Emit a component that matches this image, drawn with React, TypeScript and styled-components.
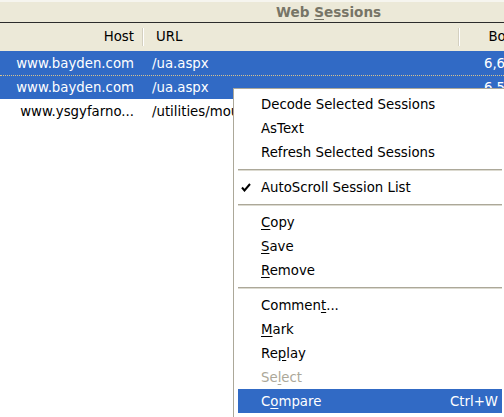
import styled, { createGlobalStyle } from "styled-components";

const GlobalStyle = createGlobalStyle`
  html, body {
    margin: 0;
    padding: 0;
    background: #ffffff;
  }
  body {
    font-family: "DejaVu Sans", Verdana, sans-serif;
    font-size: 13.3px;
  }
`;

type Session = {
  host: string;
  url: string;
  body: string;
  selected: boolean;
  focused?: boolean;
};

type MenuEntry =
  | { kind: "separator" }
  | {
      kind: "item";
      label: string;
      accessKey?: number;
      checked?: boolean;
      disabled?: boolean;
      active?: boolean;
      shortcut?: string;
    };

const sessions: Session[] = [
  { host: "www.bayden.com", url: "/ua.aspx", body: "6,606", selected: true },
  {
    host: "www.bayden.com",
    url: "/ua.aspx",
    body: "6,551",
    selected: true,
    focused: true,
  },
  {
    host: "www.ysgyfarno...",
    url: "/utilities/mouse.aspx",
    body: "2,140",
    selected: false,
  },
];

const menu: MenuEntry[] = [
  { kind: "item", label: "Decode Selected Sessions" },
  { kind: "item", label: "AsText" },
  { kind: "item", label: "Refresh Selected Sessions" },
  { kind: "separator" },
  { kind: "item", label: "AutoScroll Session List", checked: true },
  { kind: "separator" },
  { kind: "item", label: "Copy", accessKey: 0 },
  { kind: "item", label: "Save", accessKey: 0 },
  { kind: "item", label: "Remove", accessKey: 0 },
  { kind: "separator" },
  { kind: "item", label: "Comment...", accessKey: 6 },
  { kind: "item", label: "Mark", accessKey: 0 },
  { kind: "item", label: "Replay", accessKey: 2 },
  { kind: "item", label: "Select", accessKey: 2, disabled: true },
  {
    kind: "item",
    label: "Compare",
    accessKey: 1,
    active: true,
    shortcut: "Ctrl+W",
  },
];

const Frame = styled.div`
  position: relative;
  width: 504px;
  height: 417px;
  overflow: hidden;
  background: #ffffff;
`;

const TitleBar = styled.div`
  height: 20px;
  background: #ece9d8;
  border-top: 2px solid #f6f5ef;
  border-bottom: 1px solid #2b2b2b;
  display: flex;
  align-items: center;
  padding-left: 276px;
`;

const Title = styled.span`
  font-weight: bold;
  font-size: 13.6px;
  color: #777567;
  white-space: nowrap;
`;

const Grid = styled.div`
  display: grid;
  grid-template-columns: 142px 316px 72px;
  width: 530px;
`;

const HeaderRow = styled(Grid)`
  height: 28px;
  background: #ece9d8;
  align-items: center;
`;

const HeaderCell = styled.div<{ $align: "left" | "right"; $divider?: boolean }>`
  position: relative;
  height: 18px;
  line-height: 18px;
  color: #000000;
  white-space: nowrap;
  text-align: ${({ $align }) => $align};
  padding: ${({ $align }) => ($align === "right" ? "0 8px 0 0" : "0 0 0 13px")};
  border-left: ${({ $divider }) => ($divider ? "1px solid #d4d0c0" : "none")};
  box-shadow: ${({ $divider }) => ($divider ? "inset 1px 0 0 #ffffff" : "none")};
`;

const HiddenColumnEdge = styled.div`
  position: absolute;
  left: -140px;
  top: -2px;
  width: 2px;
  height: 18px;
  background: #ffffff;
`;

const SessionRow = styled(Grid)<{ $selected: boolean; $focused?: boolean }>`
  height: 24px;
  box-sizing: border-box;
  align-items: center;
  background: ${({ $selected }) => ($selected ? "#316ac5" : "#ffffff")};
  color: ${({ $selected }) => ($selected ? "#ffffff" : "#000000")};
  border-top: ${({ $focused }) => ($focused ? "1px dotted #d8c48e" : "none")};
`;

const Cell = styled.div<{ $align: "left" | "right" }>`
  white-space: nowrap;
  overflow: hidden;
  text-align: ${({ $align }) => $align};
  padding: ${({ $align }) => ($align === "right" ? "0 8px 0 0" : "0 0 0 10px")};
`;

const HostCell = styled(Cell)`
  padding-right: 8px;
`;

const Menu = styled.div`
  position: absolute;
  left: 233px;
  top: 88px;
  width: 271px;
  height: 340px;
  box-sizing: border-box;
  background: #ffffff;
  border: 1px solid #aca899;
  border-right: none;
  padding: 3px 2px 0 4px;
`;

const MenuItem = styled.div<{ $active?: boolean; $disabled?: boolean }>`
  position: relative;
  display: flex;
  align-items: center;
  justify-content: space-between;
  height: 24px;
  padding: 0 4px 0 23px;
  white-space: nowrap;
  background: ${({ $active }) => ($active ? "#316ac5" : "transparent")};
  color: ${({ $active, $disabled }) =>
    $active ? "#ffffff" : $disabled ? "#aca899" : "#000000"};
`;

const Separator = styled.div`
  height: 11px;
  display: flex;
  align-items: center;

  &::after {
    content: "";
    display: block;
    width: 100%;
    height: 1px;
    background: #aca899;
    box-shadow: 0 1px 0 #dcdad0;
  }
`;

const Check = styled.svg`
  position: absolute;
  left: 3px;
  top: 8px;
`;

const Access = styled.span`
  text-decoration: underline;
  text-underline-offset: 2px;
`;

const Label = ({ text, index }: { text: string; index?: number }) => {
  if (index === undefined) return <span>{text}</span>;
  return (
    <span>
      {text.slice(0, index)}
      <Access>{text[index]}</Access>
      {text.slice(index + 1)}
    </span>
  );
};

const App = () => {
  return (
    <Frame>
      <GlobalStyle />
      <TitleBar>
        <Title>
          Web <Access>S</Access>essions
        </Title>
      </TitleBar>
      <HeaderRow>
        <HeaderCell $align="right">
          Host
          <HiddenColumnEdge />
        </HeaderCell>
        <HeaderCell $align="left" $divider>
          URL
        </HeaderCell>
        <HeaderCell $align="right" $divider>
          Body
        </HeaderCell>
      </HeaderRow>
      {sessions.map((s, idx) => (
        <SessionRow key={idx} $selected={s.selected} $focused={s.focused}>
          <HostCell $align="right">{s.host}</HostCell>
          <Cell $align="left">{s.url}</Cell>
          <Cell $align="right">{s.body}</Cell>
        </SessionRow>
      ))}

      <Menu>
        {menu.map((entry, idx) =>
          entry.kind === "separator" ? (
            <Separator key={idx} />
          ) : (
            <MenuItem
              key={idx}
              $active={entry.active}
              $disabled={entry.disabled}
            >
              {entry.checked && (
                <Check width="10" height="9" viewBox="0 0 10 9">
                  <path
                    d="M1 4.5 L3.5 7.5 L9 1"
                    fill="none"
                    stroke="#000"
                    strokeWidth="2"
                  />
                </Check>
              )}
              <Label text={entry.label} index={entry.accessKey} />
              {entry.shortcut && <span>{entry.shortcut}</span>}
            </MenuItem>
          )
        )}
      </Menu>
    </Frame>
  );
};

export default App;
